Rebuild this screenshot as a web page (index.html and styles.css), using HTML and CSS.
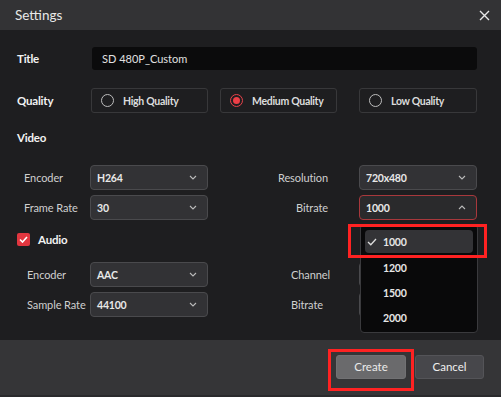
FILE: index.html
```html
<!DOCTYPE html>
<html>
<head>
<meta charset="utf-8">
<link rel="stylesheet" href="styles.css">
</head>
<body>
<div class="window">
  <div class="header">
    <span class="win-title">Settings</span>
    <svg class="close" width="11" height="11" viewBox="0 0 11 11"><path d="M1 1L10 10M10 1L1 10" stroke="#e8e8e8" stroke-width="1.4" fill="none"/></svg>
  </div>
  <div class="main">
    <div class="row title-row">
      <span class="section">Title</span>
      <div class="text-input">SD 480P_Custom</div>
    </div>
    <div class="row quality-row">
      <span class="section">Quality</span>
      <div class="qbox q-high"><span class="radio"></span>High Quality</div>
      <div class="qbox q-med"><span class="radio on"></span>Medium Quality</div>
      <div class="qbox q-low"><span class="radio"></span>Low Quality</div>
    </div>
    <div class="section heading">Video</div>
    <div class="grid video-grid">
      <span class="lbl">Encoder</span>
      <div class="select"><span>H264</span><svg class="chev" width="8" height="5" viewBox="0 0 8 5"><path d="M1 1L4 4L7 1" stroke="#bbb" stroke-width="1.1" fill="none"/></svg></div>
      <span class="lbl rlbl">Resolution</span>
      <div class="select"><span>720x480</span><svg class="chev" width="8" height="5" viewBox="0 0 8 5"><path d="M1 1L4 4L7 1" stroke="#bbb" stroke-width="1.1" fill="none"/></svg></div>
      <span class="lbl">Frame Rate</span>
      <div class="select"><span>30</span><svg class="chev" width="8" height="5" viewBox="0 0 8 5"><path d="M1 1L4 4L7 1" stroke="#bbb" stroke-width="1.1" fill="none"/></svg></div>
      <span class="lbl rlbl">Bitrate</span>
      <div class="select open"><span>1000</span><svg class="chev" width="8" height="5" viewBox="0 0 8 5"><path d="M1 4L4 1L7 4" stroke="#bbb" stroke-width="1.1" fill="none"/></svg></div>
    </div>
    <div class="section heading audio-head">
      <span class="checkbox"><svg width="9" height="7" viewBox="0 0 9 7"><path d="M1 3.5L3.5 6L8 1" stroke="#fff" stroke-width="1.6" fill="none"/></svg></span>
      Audio
    </div>
    <div class="grid audio-grid">
      <span class="lbl">Encoder</span>
      <div class="select"><span>AAC</span><svg class="chev" width="8" height="5" viewBox="0 0 8 5"><path d="M1 1L4 4L7 1" stroke="#bbb" stroke-width="1.1" fill="none"/></svg></div>
      <span class="lbl llbl">Channel</span>
      <div class="select"><span>2</span></div>
      <span class="lbl">Sample Rate</span>
      <div class="select"><span>44100</span><svg class="chev" width="8" height="5" viewBox="0 0 8 5"><path d="M1 1L4 4L7 1" stroke="#bbb" stroke-width="1.1" fill="none"/></svg></div>
      <span class="lbl llbl">Bitrate</span>
      <div class="select"><span>128</span></div>
    </div>
  </div>
  <div class="footer">
    <button class="btn create">Create</button>
    <button class="btn cancel">Cancel</button>
  </div>

  <div class="dropdown">
    <div class="opt sel"><svg class="tick" width="10" height="8" viewBox="0 0 10 8"><path d="M1 4L3.8 6.8L9 1" stroke="#ddd" stroke-width="1.3" fill="none"/></svg>1000</div>
    <div class="opt">1200</div>
    <div class="opt">1500</div>
    <div class="opt">2000</div>
  </div>
  <div class="mark mark-opt"></div>
  <div class="mark mark-btn"></div>
</div>
</body>
</html>
```
FILE: styles.css
```css
* { box-sizing: border-box; }
html, body { margin: 0; padding: 0; background: #1e1e20; }
body { font-family: Lato, "Noto Sans", sans-serif; color: #e6e6e6; }

.window {
  position: relative;
  width: 501px;
  height: 397px;
  display: flex;
  flex-direction: column;
  background: #1e1e20;
  overflow: hidden;
}

.header {
  height: 30px;
  background: #333335;
  display: flex;
  align-items: center;
  justify-content: space-between;
  padding: 0 11px 0 15px;
  flex-shrink: 0;
}
.win-title { font-size: 13.5px; color: #e8e8e8; }
.close { display: block; }

.main {
  flex: 1;
  display: flex;
  flex-direction: column;
  padding-left: 17px;
}

.row { display: flex; align-items: center; }
.section { font-size: 11.5px; font-weight: 700; color: #f2f2f2; letter-spacing: -0.2px; }

.title-row { margin-top: 17px; height: 23px; }
.title-row .section { width: 75px; }
.text-input {
  width: 385px;
  height: 23px;
  background: #0b0b0c;
  border-radius: 3px;
  font-size: 11px;
  color: #e0e0e0;
  display: flex;
  align-items: center;
  padding-left: 10px;
}

.quality-row { margin-top: 18px; height: 25px; }
.quality-row .section { width: 74px; }
.qbox {
  height: 25px;
  border: 1px solid #38383a;
  border-radius: 3px;
  display: flex;
  align-items: center;
  padding-left: 9px;
  font-size: 10.5px;
  font-weight: 700;
  letter-spacing: -0.3px;
  color: #dcdcdc;
}
.q-high { width: 117px; }
.q-med { width: 117px; margin-left: 12px; }
.q-low { width: 118px; margin-left: 22px; }
.radio {
  width: 13px;
  height: 13px;
  border: 1.3px solid #bdbdbd;
  border-radius: 50%;
  margin-right: 9px;
  display: flex;
  align-items: center;
  justify-content: center;
  flex-shrink: 0;
}
.radio.on { border-color: #e8424a; }
.radio.on::after {
  content: "";
  width: 7px;
  height: 7px;
  border-radius: 50%;
  background: #ee3f47;
}

.heading { height: 16px; display: flex; align-items: center; margin-top: 16px; }

.grid {
  display: grid;
  grid-template-rows: 25px 25px;
  row-gap: 5px;
  align-items: center;
}
.video-grid {
  margin-top: 20px;
  padding-left: 7px;
  grid-template-columns: 66px 118px 151px 118px;
}
.audio-grid {
  margin-top: 16px;
  padding-left: 10px;
  grid-template-columns: 63px 118px 151px 118px;
}

.lbl { font-size: 11px; color: #cfcfcf; white-space: nowrap; letter-spacing: -0.1px; }
.rlbl { text-align: right; padding-right: 31px; }
.llbl { padding-left: 83px; }

.select {
  height: 25px;
  background: #323235;
  border: 1px solid #4a4a4d;
  border-radius: 4px;
  display: flex;
  align-items: center;
  justify-content: space-between;
  padding: 0 10px 0 6px;
  font-size: 10.5px;
  font-weight: 700;
  letter-spacing: -0.2px;
  color: #e8e8e8;
}
.select.open { border-color: #a8383c; background: #2a2a2c; }
.chev { display: block; }

.audio-head { margin-top: 12px; height: 14px; }
.checkbox {
  width: 13px;
  height: 13px;
  background: #e2363f;
  border-radius: 2px;
  display: flex;
  align-items: center;
  justify-content: center;
  margin-right: 8px;
}
.checkbox svg { display: block; }

.footer {
  height: 57px;
  flex-shrink: 0;
  background: #353537;
  border-bottom: 2px solid #2a2a2c;
  display: flex;
  align-items: center;
  justify-content: flex-end;
  padding: 0 17px 2px 0;
  gap: 9px;
}
.btn {
  height: 24px;
  border-radius: 3px;
  font-family: Lato, "Noto Sans", sans-serif;
  font-size: 11.5px;
  color: #f0f0f0;
  display: flex;
  align-items: center;
  justify-content: center;
  padding: 0;
}
.create { width: 70px; background: #6a6a6c; border: 1px solid #717173; color: #eaeaea; }
.cancel { width: 69px; background: #47474b; border: 1px solid #545458; }

.dropdown {
  position: absolute;
  left: 360px;
  top: 224px;
  width: 118px;
  height: 109px;
  background: #09090a;
  border: 1px solid #3a3a3d;
  border-radius: 4px;
  padding: 5px 4px;
  display: flex;
  flex-direction: column;
}
.opt {
  height: 25px;
  flex-shrink: 0;
  display: flex;
  align-items: center;
  padding-left: 18px;
  font-size: 10.5px;
  font-weight: 700;
  letter-spacing: -0.2px;
  color: #e6e6e6;
}
.opt.sel {
  height: 23px;
  margin-bottom: 2px;
  background: #333336;
  border-radius: 4px;
  padding-left: 2px;
}
.tick { display: block; margin-right: 6px; }

.mark {
  position: absolute;
  border: 3px solid #ff2222;
}
.mark-opt { left: 348px; top: 224px; width: 139px; height: 34px; }
.mark-btn { left: 328px; top: 349px; width: 86px; height: 42px; }
```
